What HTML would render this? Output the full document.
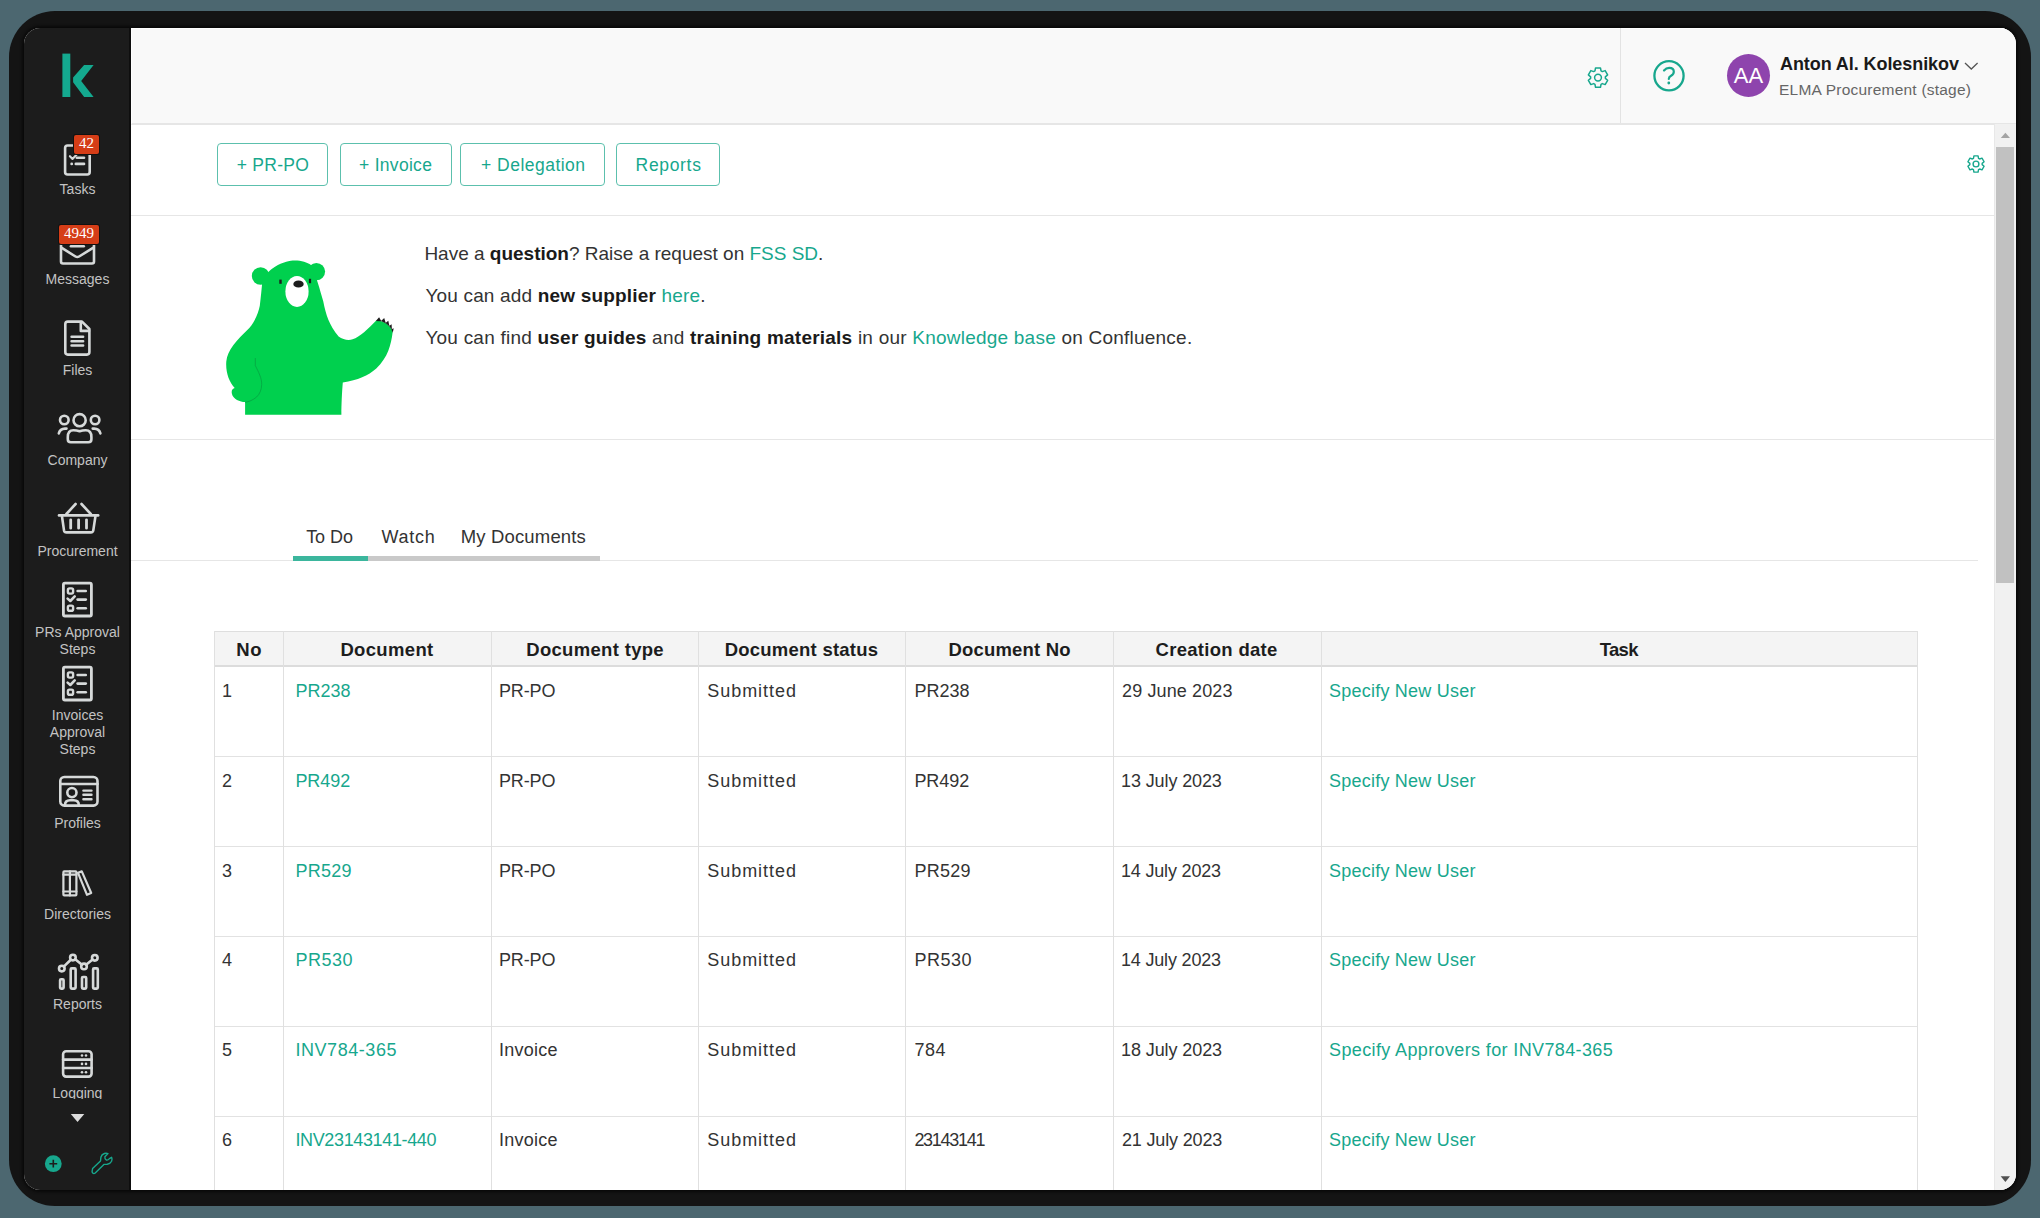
<!DOCTYPE html>
<html><head><meta charset="utf-8"><style>
*{box-sizing:border-box}
html,body{margin:0;padding:0}
body{width:2040px;height:1218px;overflow:hidden;background:#4c6770;position:relative;font-family:"Liberation Sans",sans-serif}
.t{position:absolute;white-space:nowrap}
.abs{position:absolute}
</style></head>
<body>
<div class="abs" style="left:9px;top:11px;width:2022px;height:1195px;border-radius:46px;background:#141414"></div><div class="abs" id="app" style="left:24px;top:28px;width:1992px;height:1162px;border-radius:16px;overflow:hidden;background:#fff;box-shadow:0 0 3px 2px #090909"><div class="abs" style="left:0;top:0;width:107px;height:1162px;background:#1c1c1c;border-right:2px solid #0e0e0e"></div><div class="abs" style="left:107px;top:0;width:1885px;height:97px;background:#f9f9f9;border-bottom:2px solid #e6e6e6;border-top:1px solid #fff;border-left:1px solid #fff"></div></div>
<div class="abs" style="left:24px;top:28px;width:1992px;height:1162px;overflow:hidden;border-radius:16px"><div class="abs" style="left:-24px;top:-28px;width:2040px;height:1218px"><svg class="abs" style="left:0;top:0" width="2040" height="1218" viewBox="0 0 2040 1218"><circle cx="260.6" cy="276" r="8.8" fill="#00d04e"/><circle cx="316.4" cy="271.6" r="8.7" fill="#00d04e"/><path fill="#00d04e" d="M245.1 414.7 L245.1 402.1 C240 402 233 399 231.9 393.7 C231 390 233 388.5 234.7 388.1
 C229 382 225.5 372 226.3 361.6 C227.5 350 236 341 249.3 328.1 C256 320 258.5 312 259.8 305.8
 C261 296 261.5 290 262 284.9 C263 274 275 263 292.6 260.5 C300 260 307 262 311 265
 C316 275 320 290 323.3 301.6 C326 315 329 325 338.6 336.5 C343 340 349 340.5 352.6 339.3
 C360 337 368 329 376 320.8 C381 320.5 386 322.5 389.3 326.2 C391.5 328.7 392.6 330.5 392.6 332.5 C391 345 388 357 376.3 368.6
 C368 376 358 380 342.8 382.6 C342 392 341.4 405 341.4 414.7 Z"/><path d="M255.3 358 L255.3 365.5 C258.5 372 261.8 378 261.7 384.5 C261.5 390 259.8 394 256.5 397.1 C253 400 249 401.8 245 402.3" fill="none" stroke="#069a40" stroke-width="0.8" opacity="0.85"/><ellipse cx="297" cy="291.4" rx="11.6" ry="15.5" fill="#fff"/><ellipse cx="298.5" cy="284" rx="5.2" ry="3.6" fill="#1d1d1d"/><rect x="279.3" y="279.6" width="2.4" height="4.2" fill="#1d1d1d"/><rect x="308.9" y="278.8" width="2.2" height="4.4" fill="#1d1d1d"/><path fill="#1d1d1d" d="M375.8 321 L379.1 317.2 L381.4 321.3 Z M381 321.1 L384.2 318.1 L385.9 323.4 Z M385.5 323.1 L388.3 320.7 L389.5 326.4 Z M389.1 326 L391.6 324.3 L391.9 329.8 Z M391.4 329.3 L393.7 328.3 L392.8 332.8 Z"/></svg><div class="abs" style="left:131px;top:215px;width:1863px;height:1px;background:#e6e6e6"></div><div class="abs" style="left:131px;top:439px;width:1863px;height:1px;background:#e6e6e6"></div><div class="abs" style="left:131px;top:560px;width:1847px;height:1px;background:#e6e6e6"></div><div class="abs" style="left:217px;top:143px;width:111px;height:43px;border:1.5px solid #5cc0ad;border-radius:4px"></div><div class="t" style="left:217.40px;top:153.74px;font-size:17.5px;line-height:22px;color:#17a78d;font-weight:400;text-align:center;width:111px;letter-spacing:0.267px;">+ PR-PO</div>
<div class="abs" style="left:340px;top:143px;width:112px;height:43px;border:1.5px solid #5cc0ad;border-radius:4px"></div><div class="t" style="left:339.60px;top:153.74px;font-size:17.5px;line-height:22px;color:#17a78d;font-weight:400;text-align:center;width:112px;letter-spacing:0.300px;">+ Invoice</div>
<div class="abs" style="left:460px;top:143px;width:145px;height:43px;border:1.5px solid #5cc0ad;border-radius:4px"></div><div class="t" style="left:460.80px;top:153.74px;font-size:17.5px;line-height:22px;color:#17a78d;font-weight:400;text-align:center;width:145px;letter-spacing:0.473px;">+ Delegation</div>
<div class="abs" style="left:616px;top:143px;width:104px;height:43px;border:1.5px solid #5cc0ad;border-radius:4px"></div><div class="t" style="left:616.60px;top:153.74px;font-size:17.5px;line-height:22px;color:#17a78d;font-weight:400;text-align:center;width:104px;letter-spacing:0.667px;">Reports</div>
<div class="t" style="left:424.40px;top:241.92px;font-size:19px;line-height:24px;color:#333;font-weight:400;text-align:left;letter-spacing:-0.005px;">Have a <b style="color:#1a1a1a">question</b>? Raise a request on <span style="color:#17a78d">FSS SD</span>.</div>
<div class="t" style="left:425.40px;top:284.42px;font-size:19px;line-height:24px;color:#333;font-weight:400;text-align:left;letter-spacing:0.179px;">You can add <b style="color:#1a1a1a">new supplier</b> <span style="color:#17a78d">here</span>.</div>
<div class="t" style="left:425.40px;top:326.02px;font-size:19px;line-height:24px;color:#333;font-weight:400;text-align:left;letter-spacing:0.224px;">You can find <b style="color:#1a1a1a">user guides</b> and <b style="color:#1a1a1a">training materials</b> in our <span style="color:#17a78d">Knowledge base</span> on Confluence.</div>
<div class="t" style="left:306.20px;top:525.96px;font-size:18px;line-height:22px;color:#333;font-weight:400;text-align:left;letter-spacing:-0.075px;">To Do</div>
<div class="t" style="left:381.50px;top:525.96px;font-size:18px;line-height:22px;color:#333;font-weight:400;text-align:left;letter-spacing:0.750px;">Watch</div>
<div class="t" style="left:460.70px;top:525.29px;font-size:18.5px;line-height:23px;color:#333;font-weight:400;text-align:left;letter-spacing:0.164px;">My Documents</div>
<div class="abs" style="left:293px;top:556px;width:75px;height:5px;background:#3bb69d"></div><div class="abs" style="left:368px;top:556px;width:232px;height:5px;background:#c9c9c9"></div><div class="abs" style="left:214px;top:631px;width:1704px;height:35px;background:#f4f4f4"></div><div class="abs" style="left:214px;top:631px;width:1704px;height:1px;background:#dedede"></div><div class="abs" style="left:214px;top:665px;width:1704px;height:2px;background:#dcdcdc"></div><div class="abs" style="left:214px;top:756px;width:1704px;height:1px;background:#e2e2e2"></div><div class="abs" style="left:214px;top:846px;width:1704px;height:1px;background:#e2e2e2"></div><div class="abs" style="left:214px;top:936px;width:1704px;height:1px;background:#e2e2e2"></div><div class="abs" style="left:214px;top:1026px;width:1704px;height:1px;background:#e2e2e2"></div><div class="abs" style="left:214px;top:1116px;width:1704px;height:1px;background:#e2e2e2"></div><div class="abs" style="left:214px;top:1206px;width:1704px;height:1px;background:#e2e2e2"></div><div class="abs" style="left:214px;top:631px;width:1px;height:559px;background:#e0e0e0"></div><div class="abs" style="left:283px;top:631px;width:1px;height:559px;background:#e0e0e0"></div><div class="abs" style="left:491px;top:631px;width:1px;height:559px;background:#e0e0e0"></div><div class="abs" style="left:698px;top:631px;width:1px;height:559px;background:#e0e0e0"></div><div class="abs" style="left:905px;top:631px;width:1px;height:559px;background:#e0e0e0"></div><div class="abs" style="left:1113px;top:631px;width:1px;height:559px;background:#e0e0e0"></div><div class="abs" style="left:1321px;top:631px;width:1px;height:559px;background:#e0e0e0"></div><div class="abs" style="left:1917px;top:631px;width:1px;height:559px;background:#e0e0e0"></div><div class="t" style="left:214.80px;top:638.09px;font-size:18.5px;line-height:23px;color:#1d1d1d;font-weight:700;text-align:center;width:69px;letter-spacing:0.800px;">No</div>
<div class="t" style="left:283.00px;top:638.09px;font-size:18.5px;line-height:23px;color:#1d1d1d;font-weight:700;text-align:center;width:208px;letter-spacing:0.343px;">Document</div>
<div class="t" style="left:491.60px;top:638.09px;font-size:18.5px;line-height:23px;color:#1d1d1d;font-weight:700;text-align:center;width:207px;letter-spacing:0.317px;">Document type</div>
<div class="t" style="left:698.00px;top:638.09px;font-size:18.5px;line-height:23px;color:#1d1d1d;font-weight:700;text-align:center;width:207px;letter-spacing:0.243px;">Document status</div>
<div class="t" style="left:905.60px;top:638.09px;font-size:18.5px;line-height:23px;color:#1d1d1d;font-weight:700;text-align:center;width:208px;letter-spacing:0.180px;">Document No</div>
<div class="t" style="left:1112.60px;top:638.09px;font-size:18.5px;line-height:23px;color:#1d1d1d;font-weight:700;text-align:center;width:208px;letter-spacing:0.300px;">Creation date</div>
<div class="t" style="left:1320.80px;top:638.09px;font-size:18.5px;line-height:23px;color:#1d1d1d;font-weight:700;text-align:center;width:596px;letter-spacing:-0.733px;">Task</div>
<div class="t" style="left:222.00px;top:679.86px;font-size:18px;line-height:22px;color:#333;font-weight:400;text-align:left;">1</div>
<div class="t" style="left:295.40px;top:679.86px;font-size:18px;line-height:22px;color:#17a78d;font-weight:400;text-align:left;">PR238</div>
<div class="t" style="left:499.00px;top:679.86px;font-size:18px;line-height:22px;color:#333;font-weight:400;text-align:left;letter-spacing:-0.150px;">PR-PO</div>
<div class="t" style="left:707.20px;top:679.86px;font-size:18px;line-height:22px;color:#333;font-weight:400;text-align:left;letter-spacing:0.975px;">Submitted</div>
<div class="t" style="left:914.40px;top:679.86px;font-size:18px;line-height:22px;color:#333;font-weight:400;text-align:left;">PR238</div>
<div class="t" style="left:1122.00px;top:679.86px;font-size:18px;line-height:22px;color:#333;font-weight:400;text-align:left;letter-spacing:0.127px;">29 June 2023</div>
<div class="t" style="left:1329.00px;top:679.86px;font-size:18px;line-height:22px;color:#17a78d;font-weight:400;text-align:left;letter-spacing:0.227px;">Specify New User</div>
<div class="t" style="left:222.00px;top:769.68px;font-size:18px;line-height:22px;color:#333;font-weight:400;text-align:left;">2</div>
<div class="t" style="left:295.40px;top:769.68px;font-size:18px;line-height:22px;color:#17a78d;font-weight:400;text-align:left;letter-spacing:-0.050px;">PR492</div>
<div class="t" style="left:499.00px;top:769.68px;font-size:18px;line-height:22px;color:#333;font-weight:400;text-align:left;letter-spacing:-0.150px;">PR-PO</div>
<div class="t" style="left:707.20px;top:769.68px;font-size:18px;line-height:22px;color:#333;font-weight:400;text-align:left;letter-spacing:0.975px;">Submitted</div>
<div class="t" style="left:914.40px;top:769.68px;font-size:18px;line-height:22px;color:#333;font-weight:400;text-align:left;letter-spacing:-0.050px;">PR492</div>
<div class="t" style="left:1121.00px;top:769.68px;font-size:18px;line-height:22px;color:#333;font-weight:400;text-align:left;letter-spacing:-0.109px;">13 July 2023</div>
<div class="t" style="left:1329.00px;top:769.68px;font-size:18px;line-height:22px;color:#17a78d;font-weight:400;text-align:left;letter-spacing:0.227px;">Specify New User</div>
<div class="t" style="left:222.00px;top:859.50px;font-size:18px;line-height:22px;color:#333;font-weight:400;text-align:left;">3</div>
<div class="t" style="left:295.40px;top:859.50px;font-size:18px;line-height:22px;color:#17a78d;font-weight:400;text-align:left;letter-spacing:0.250px;">PR529</div>
<div class="t" style="left:499.00px;top:859.50px;font-size:18px;line-height:22px;color:#333;font-weight:400;text-align:left;letter-spacing:-0.150px;">PR-PO</div>
<div class="t" style="left:707.20px;top:859.50px;font-size:18px;line-height:22px;color:#333;font-weight:400;text-align:left;letter-spacing:0.975px;">Submitted</div>
<div class="t" style="left:914.40px;top:859.50px;font-size:18px;line-height:22px;color:#333;font-weight:400;text-align:left;letter-spacing:0.250px;">PR529</div>
<div class="t" style="left:1121.00px;top:859.50px;font-size:18px;line-height:22px;color:#333;font-weight:400;text-align:left;letter-spacing:-0.182px;">14 July 2023</div>
<div class="t" style="left:1329.00px;top:859.50px;font-size:18px;line-height:22px;color:#17a78d;font-weight:400;text-align:left;letter-spacing:0.227px;">Specify New User</div>
<div class="t" style="left:222.00px;top:949.32px;font-size:18px;line-height:22px;color:#333;font-weight:400;text-align:left;">4</div>
<div class="t" style="left:295.40px;top:949.32px;font-size:18px;line-height:22px;color:#17a78d;font-weight:400;text-align:left;letter-spacing:0.500px;">PR530</div>
<div class="t" style="left:499.00px;top:949.32px;font-size:18px;line-height:22px;color:#333;font-weight:400;text-align:left;letter-spacing:-0.150px;">PR-PO</div>
<div class="t" style="left:707.20px;top:949.32px;font-size:18px;line-height:22px;color:#333;font-weight:400;text-align:left;letter-spacing:0.975px;">Submitted</div>
<div class="t" style="left:914.40px;top:949.32px;font-size:18px;line-height:22px;color:#333;font-weight:400;text-align:left;letter-spacing:0.500px;">PR530</div>
<div class="t" style="left:1121.00px;top:949.32px;font-size:18px;line-height:22px;color:#333;font-weight:400;text-align:left;letter-spacing:-0.182px;">14 July 2023</div>
<div class="t" style="left:1329.00px;top:949.32px;font-size:18px;line-height:22px;color:#17a78d;font-weight:400;text-align:left;letter-spacing:0.227px;">Specify New User</div>
<div class="t" style="left:222.00px;top:1039.14px;font-size:18px;line-height:22px;color:#333;font-weight:400;text-align:left;">5</div>
<div class="t" style="left:295.40px;top:1039.14px;font-size:18px;line-height:22px;color:#17a78d;font-weight:400;text-align:left;letter-spacing:0.556px;">INV784-365</div>
<div class="t" style="left:499.00px;top:1039.14px;font-size:18px;line-height:22px;color:#333;font-weight:400;text-align:left;letter-spacing:0.233px;">Invoice</div>
<div class="t" style="left:707.20px;top:1039.14px;font-size:18px;line-height:22px;color:#333;font-weight:400;text-align:left;letter-spacing:0.975px;">Submitted</div>
<div class="t" style="left:914.40px;top:1039.14px;font-size:18px;line-height:22px;color:#333;font-weight:400;text-align:left;letter-spacing:0.500px;">784</div>
<div class="t" style="left:1121.00px;top:1039.14px;font-size:18px;line-height:22px;color:#333;font-weight:400;text-align:left;letter-spacing:-0.091px;">18 July 2023</div>
<div class="t" style="left:1329.00px;top:1039.14px;font-size:18px;line-height:22px;color:#17a78d;font-weight:400;text-align:left;letter-spacing:0.374px;">Specify Approvers for INV784-365</div>
<div class="t" style="left:222.00px;top:1128.96px;font-size:18px;line-height:22px;color:#333;font-weight:400;text-align:left;">6</div>
<div class="t" style="left:295.40px;top:1128.96px;font-size:18px;line-height:22px;color:#17a78d;font-weight:400;text-align:left;letter-spacing:-0.357px;">INV23143141-440</div>
<div class="t" style="left:499.00px;top:1128.96px;font-size:18px;line-height:22px;color:#333;font-weight:400;text-align:left;letter-spacing:0.233px;">Invoice</div>
<div class="t" style="left:707.20px;top:1128.96px;font-size:18px;line-height:22px;color:#333;font-weight:400;text-align:left;letter-spacing:0.975px;">Submitted</div>
<div class="t" style="left:914.40px;top:1128.96px;font-size:18px;line-height:22px;color:#333;font-weight:400;text-align:left;letter-spacing:-1.286px;">23143141</div>
<div class="t" style="left:1122.00px;top:1128.96px;font-size:18px;line-height:22px;color:#333;font-weight:400;text-align:left;letter-spacing:-0.164px;">21 July 2023</div>
<div class="t" style="left:1329.00px;top:1128.96px;font-size:18px;line-height:22px;color:#17a78d;font-weight:400;text-align:left;letter-spacing:0.227px;">Specify New User</div>
<div class="abs" style="left:1994px;top:124px;width:22px;height:1066px;background:#f1f1f1;border-left:1px solid #e8e8e8"></div><div class="abs" style="left:1996px;top:147px;width:18px;height:436px;background:#c1c1c1"></div><svg class="abs" style="left:1994px;top:124px" width="22" height="1066"><polygon points="6.8,14 16,14 11.4,8.8" fill="#a3a3a3"/><polygon points="6.7,1052.2 16,1052.2 11.4,1058" fill="#505050"/></svg></div></div><svg class="abs" style="left:0;top:0" width="2040" height="1218" viewBox="0 0 2040 1218"><rect x="62.4" y="53.6" width="7.9" height="43.4" fill="#14a98f"/><polygon points="93.6,64.9 84.1,64.9 73.1,77.6 73.1,82.2 84.1,97 93.6,97 81.2,80.9" fill="#14a98f"/><g fill="none" stroke="#d6d9d9" stroke-width="2.6" stroke-linecap="round" stroke-linejoin="round"><rect x="65.1" y="145.5" width="24.6" height="29" rx="2.5"/><path d="M69.9 156.2 L72.5 158.9 L76.7 154.6" stroke-width="2.1"/><path d="M76.8 157.8 H84"/><path d="M75.8 163.9 H84"/><circle cx="71.7" cy="163.9" r="1.4" fill="#d6d9d9" stroke="none"/><path d="M61 245 V261.5 Q61 263.5 63 263.5 H92 Q94 263.5 94 261.5 V245"/><path d="M61.8 247.8 L75.5 256.5 Q77.3 257.6 79.1 256.5 L93 247.8"/><path d="M70.9 246.2 H83.8"/><path d="M82 321.6 H67.8 Q65.3 321.6 65.3 324.1 V352.1 Q65.3 354.6 67.8 354.6 H86.9 Q89.4 354.6 89.4 352.1 V329 Z"/><path d="M80.8 322 V330.9 H89"/><path d="M71.6 336.8 H83.1 M71.6 341.3 H83.1 M71.6 345.5 H83.1"/><circle cx="79.6" cy="420.2" r="6.1"/><circle cx="64.3" cy="420" r="4.3"/><circle cx="95.1" cy="420" r="4.3"/><path d="M67.8 437 Q67.8 430.2 73.4 430.2 Q76.6 430.2 79.6 431.3 Q82.6 430.2 85.8 430.2 Q91.4 430.2 91.4 437 V439.2 Q91.4 442.2 88.4 442.2 H70.8 Q67.8 442.2 67.8 439.2 Z"/><path d="M58.8 433.4 Q60 428.7 65 428.6 H66.5"/><path d="M92.7 428.6 H94.2 Q99.2 428.7 100.4 433.4"/><path d="M59 515.4 H98.2"/><path d="M66.4 514 L75.6 504 M81.5 504 L90.8 514"/><path d="M62 516.5 L64 530.4 Q64.4 532.4 66.5 532.4 H90.9 Q93 532.4 93.3 530.4 L95.4 516.5"/><path d="M70.7 519.8 V528.2 M78.6 519.8 V528.2 M86.5 519.8 V528.2" stroke-width="2.8"/><rect x="63.4" y="583.2" width="28" height="32.8" rx="1.5" stroke-width="2.8"/><rect x="67.9" y="588.4" width="5.2" height="5.2" rx="1.6" stroke-width="2.4"/><path d="M77.6 591 H85.8"/><path d="M67.6 598.6 L70.3 601 L74.7 596.4"/><path d="M77.6 599.6 H85.8"/><rect x="67.9" y="605.6" width="5.2" height="5.2" rx="1.6" stroke-width="2.4"/><path d="M77.6 608.2 H85.8"/><rect x="63.4" y="667.2" width="28" height="32.8" rx="1.5" stroke-width="2.8"/><rect x="67.9" y="672.4" width="5.2" height="5.2" rx="1.6" stroke-width="2.4"/><path d="M77.6 675 H85.8"/><path d="M67.6 682.6 L70.3 685 L74.7 680.4"/><path d="M77.6 683.6 H85.8"/><rect x="67.9" y="689.6" width="5.2" height="5.2" rx="1.6" stroke-width="2.4"/><path d="M77.6 692.2 H85.8"/><rect x="60.3" y="777" width="37.2" height="28.6" rx="4"/><path d="M60.3 784 H97.5"/><circle cx="71.9" cy="792.6" r="4.6"/><path d="M65 805 Q65 800.2 70 800.2 H73.8 Q78.8 800.2 78.8 805"/><path d="M83.4 790.6 H91.5 M83.4 794.8 H91.5 M83.4 799.2 H91.5" stroke-width="2.4"/><rect x="63.4" y="871.4" width="13" height="24" rx="0.8" stroke-width="2.2"/><path d="M69.9 871.4 V895.4 M63.4 874.7 H76.4 M63.4 891.5 H76.4" stroke-width="2.2"/><polygon points="78,872.8 81.8,871.4 91.2,893 87,894.8" stroke-width="2.2"/><rect x="60.1" y="979.2" width="3.5" height="9.4" rx="1"/><rect x="70.7" y="968.4" width="4.9" height="20.2" rx="1"/><rect x="82" y="977" width="4.2" height="11.6" rx="1"/><rect x="93.1" y="968.4" width="4.7" height="20.2" rx="1"/><path d="M64 966.4 L70.8 959.8 M75.2 959.2 L81.7 964.6 M86.4 964.6 L92.6 959.6"/><circle cx="61.8" cy="968.6" r="2.8"/><circle cx="72.9" cy="957.6" r="2.8"/><circle cx="84" cy="966.4" r="2.8"/><circle cx="94.8" cy="957.8" r="2.8"/><rect x="63.1" y="1051.2" width="28.5" height="25.4" rx="3"/><path d="M63.1 1059.6 H91.6 M63.1 1068 H91.6"/><circle cx="82" cy="1055.5" r="1.3" fill="#d6d9d9" stroke="none"/><circle cx="86" cy="1055.5" r="1.3" fill="#d6d9d9" stroke="none"/><circle cx="82" cy="1063.9" r="1.3" fill="#d6d9d9" stroke="none"/><circle cx="86" cy="1063.9" r="1.3" fill="#d6d9d9" stroke="none"/><circle cx="82" cy="1072.3" r="1.3" fill="#d6d9d9" stroke="none"/><circle cx="86" cy="1072.3" r="1.3" fill="#d6d9d9" stroke="none"/></g><polygon points="70.8,1114 84.3,1114 77.5,1122" fill="#dcdcdc"/><circle cx="53.3" cy="1163.7" r="8.4" fill="#17a78d"/><path d="M49.4 1163.7 H57.2 M53.3 1159.8 V1167.6" stroke="#1d1d1d" stroke-width="1.6"/><path d="M92.6 1168.6 L100.5 1161 L100.9 1157.2 Q101.6 1154.5 104.4 1153.5 Q106.3 1152.9 108 1153.6 L104.9 1156.8 Q104.6 1158.8 106.3 1160 Q107.8 1160.6 109.4 1158.6 L111.6 1157.3 Q112.5 1159.2 111.6 1161.2 Q110.2 1163.9 107.2 1164.3 L103.9 1164.4 L95.2 1173 Q93.9 1174 92.7 1173 Q91.7 1171.9 92.3 1170 Z" fill="none" stroke="#17a78d" stroke-width="1.4" stroke-linejoin="round"/><g fill="none" stroke="#17a78d"><path d="M1594.98 70.84 L1595.53 67.91 L1600.47 67.91 L1601.02 70.84 L1602.34 71.61 L1605.15 70.61 L1607.63 74.90 L1605.36 76.83 L1605.36 78.37 L1607.63 80.30 L1605.15 84.59 L1602.34 83.59 L1601.02 84.36 L1600.47 87.29 L1595.53 87.29 L1594.98 84.36 L1593.66 83.59 L1590.85 84.59 L1588.37 80.30 L1590.64 78.37 L1590.64 76.83 L1588.37 74.90 L1590.85 70.61 L1593.66 71.61 Z" stroke-width="1.5" stroke-linejoin="round"/><circle cx="1598" cy="77.6" r="3.4" stroke-width="1.5"/><path d="M1973.47 158.34 L1973.92 155.86 L1978.08 155.86 L1978.53 158.34 L1979.64 158.98 L1982.01 158.13 L1984.09 161.73 L1982.17 163.36 L1982.17 164.64 L1984.09 166.27 L1982.01 169.87 L1979.64 169.02 L1978.53 169.66 L1978.08 172.14 L1973.92 172.14 L1973.47 169.66 L1972.36 169.02 L1969.99 169.87 L1967.91 166.27 L1969.83 164.64 L1969.83 163.36 L1967.91 161.73 L1969.99 158.13 L1972.36 158.98 Z" stroke-width="1.4" stroke-linejoin="round"/><circle cx="1976" cy="164" r="2.9" stroke-width="1.4"/><circle cx="1669" cy="75.8" r="14.6" stroke-width="2.3"/><path d="M1664 70.5 Q1666.2 67.9 1669.2 67.9 Q1673.8 67.9 1673.8 71.7 Q1673.8 74.2 1671.1 75.7 Q1668.8 77 1668.8 79" stroke-width="2.2" stroke-linecap="round"/><circle cx="1668.8" cy="83" r="1.4" fill="#17a78d" stroke="none"/></g><path d="M1965 63 L1971.3 69 L1977.6 63" fill="none" stroke="#555" stroke-width="1.3"/></svg><div class="t" style="left:24.00px;top:179.75px;font-size:14px;line-height:18px;color:#c3c3c3;font-weight:400;text-align:center;width:107px;">Tasks</div>
<div class="t" style="left:24.00px;top:270.15px;font-size:14px;line-height:18px;color:#c3c3c3;font-weight:400;text-align:center;width:107px;">Messages</div>
<div class="t" style="left:24.00px;top:361.15px;font-size:14px;line-height:18px;color:#c3c3c3;font-weight:400;text-align:center;width:107px;">Files</div>
<div class="t" style="left:24.00px;top:450.75px;font-size:14px;line-height:18px;color:#c3c3c3;font-weight:400;text-align:center;width:107px;">Company</div>
<div class="t" style="left:24.00px;top:541.65px;font-size:14px;line-height:18px;color:#c3c3c3;font-weight:400;text-align:center;width:107px;">Procurement</div>
<div class="t" style="left:24.00px;top:622.65px;font-size:14px;line-height:18px;color:#c3c3c3;font-weight:400;text-align:center;width:107px;">PRs Approval</div>
<div class="t" style="left:24.00px;top:639.85px;font-size:14px;line-height:18px;color:#c3c3c3;font-weight:400;text-align:center;width:107px;">Steps</div>
<div class="t" style="left:24.00px;top:706.15px;font-size:14px;line-height:18px;color:#c3c3c3;font-weight:400;text-align:center;width:107px;">Invoices</div>
<div class="t" style="left:24.00px;top:722.75px;font-size:14px;line-height:18px;color:#c3c3c3;font-weight:400;text-align:center;width:107px;">Approval</div>
<div class="t" style="left:24.00px;top:739.95px;font-size:14px;line-height:18px;color:#c3c3c3;font-weight:400;text-align:center;width:107px;">Steps</div>
<div class="t" style="left:24.00px;top:814.15px;font-size:14px;line-height:18px;color:#c3c3c3;font-weight:400;text-align:center;width:107px;">Profiles</div>
<div class="t" style="left:24.00px;top:904.95px;font-size:14px;line-height:18px;color:#c3c3c3;font-weight:400;text-align:center;width:107px;">Directories</div>
<div class="t" style="left:24.00px;top:994.65px;font-size:14px;line-height:18px;color:#c3c3c3;font-weight:400;text-align:center;width:107px;">Reports</div>
<div class="abs" style="left:24px;top:1080px;width:107px;height:19px;overflow:hidden"><div class="t" style="left:0.00px;top:4.15px;font-size:14px;line-height:18px;color:#c3c3c3;font-weight:400;text-align:center;width:107px;">Logging</div>
</div><div class="abs" style="left:74px;top:135px;width:25px;height:19px;background:#d53d17;border-radius:2px;box-shadow:0 0 0 1px #111"></div><div class="t" style="left:74.00px;top:134.20px;font-size:15px;line-height:19px;color:#fff;font-weight:400;text-align:center;width:25px;font-family:'Liberation Serif',serif;">42</div>
<div class="abs" style="left:59px;top:225px;width:40px;height:19px;background:#d53d17;border-radius:2px;box-shadow:0 0 0 1px #111"></div><div class="t" style="left:59.00px;top:224.20px;font-size:15px;line-height:19px;color:#fff;font-weight:400;text-align:center;width:40px;font-family:'Liberation Serif',serif;">4949</div>
<div class="abs" style="left:1619.5px;top:28px;width:1.5px;height:95px;background:#e3e3e3"></div><div class="abs" style="left:1727px;top:54px;width:43px;height:43px;border-radius:50%;background:#8e44ad"></div><div class="t" style="left:1727.00px;top:61.88px;font-size:22px;line-height:28px;color:#fff;font-weight:400;text-align:center;width:43px;">AA</div>
<div class="t" style="left:1780.00px;top:52.66px;font-size:18px;line-height:22px;color:#1a1a1a;font-weight:700;text-align:left;letter-spacing:-0.074px;">Anton Al. Kolesnikov</div>
<div class="t" style="left:1779.00px;top:79.53px;font-size:15.5px;line-height:19px;color:#666;font-weight:400;text-align:left;letter-spacing:0.217px;">ELMA Procurement (stage)</div>

</body></html>
